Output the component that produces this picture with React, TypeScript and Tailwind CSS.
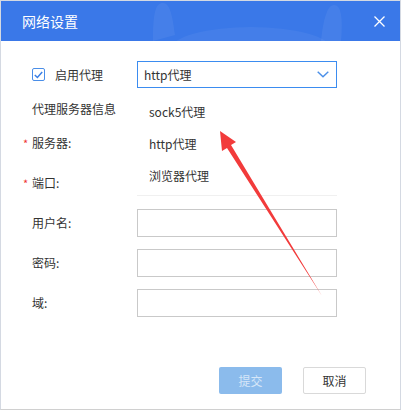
import React from "react";

const font = { fontFamily: '"Noto Sans CJK SC", "Liberation Sans", sans-serif' };

const Field = ({ label, req, input = true }: { label: string; req?: boolean; input?: boolean }) => (
  <div className="flex items-center h-[28px]">
    <div className="relative w-[105px] text-[12px] text-[#333]">
      {req && <span className="absolute -left-[9px] top-[1px] text-[#e33] text-[11px]">*</span>}
      {label}
    </div>
    {input && <div className="w-[200px] h-[28px] border border-[#c9c9c9] bg-white" />}
  </div>
);

const App = () => {
  return (
    <div
      style={font}
      className="relative w-[401px] h-[410px] bg-white border border-[#d4d9e2] border-b-[#d0d0d0] overflow-hidden flex flex-col"
    >
      <div className="relative h-[40px] bg-[#3a78e8] flex items-center justify-between pl-[21px] pr-[15px] overflow-hidden">
        <svg className="absolute left-0 top-0" width="401" height="40" viewBox="0 0 401 40">
          <path d="M152 40 C152 10 155 2 162 2 C170 2 172 20 174 34 Z" fill="#ffffff" opacity="0.06" />
          <path d="M320 40 C322 20 326 4 333 4 C340 4 342 16 340 40 Z" fill="#ffffff" opacity="0.06" />
          <ellipse cx="250" cy="48" rx="80" ry="22" fill="#ffffff" opacity="0.05" />
        </svg>
        <span className="relative text-white text-[14px]">网络设置</span>
        <svg className="relative" width="11" height="11" viewBox="0 0 11 11">
          <path d="M0.5 0.5 L10.5 10.5 M10.5 0.5 L0.5 10.5" stroke="#fff" strokeWidth="1.3" />
        </svg>
      </div>

      <div className="relative flex-1 flex flex-col pl-[31px]">
        <div className="flex flex-col gap-3 pt-[20px]">
          <div className="flex items-center h-[27px]">
            <div className="w-[105px] flex items-center gap-[10px]">
              <span className="w-[13px] h-[13px] border border-[#4a8ee8] rounded-[2px] flex items-center justify-center">
                <svg width="9" height="8" viewBox="0 0 9 8">
                  <path d="M0.8 4 L3.4 6.5 L8.2 1" stroke="#3a7fe6" strokeWidth="1.5" fill="none" />
                </svg>
              </span>
              <span className="text-[12px] text-[#333]">启用代理</span>
            </div>
            <div className="w-[200px] h-[27px] border border-[#3b8cf0] flex items-center justify-between pl-[6px] pr-[7px] text-[12px] text-[#333]">
              <span>http代理</span>
              <svg width="12" height="7" viewBox="0 0 12 7">
                <path d="M0.7 0.7 L6 5.8 L11.3 0.7" stroke="#4a8fe8" strokeWidth="1.4" fill="none" />
              </svg>
            </div>
          </div>
          <div className="h-[16px] flex items-center text-[12px] text-[#333] mt-[1px]">代理服务器信息</div>
          <Field label="服务器:" req input={false} />
          <Field label="端口:" req input={false} />
          <Field label="用户名:" />
          <Field label="密码:" />
          <Field label="域:" />
        </div>

        <div className="absolute left-[136px] top-[48px] w-[200px] h-[107px] bg-white border-b border-[#f0f0f0] py-[7px] text-[12px] text-[#333]">
          <div className="h-[32px] flex items-center pl-[12px]">sock5代理</div>
          <div className="h-[32px] flex items-center pl-[12px]">http代理</div>
          <div className="h-[32px] flex items-center pl-[12px]">浏览器代理</div>
        </div>

        <div className="flex justify-end gap-[21px] pr-[34px] mt-[50px]">
          <div className="w-[63px] h-[27px] bg-[#8bbbec] rounded-[2px] flex items-center justify-center text-[12px] text-[#d6e6f8]">
            提交
          </div>
          <div className="w-[63px] h-[27px] border border-[#d9d9d9] rounded-[2px] flex items-center justify-center text-[12px] text-[#333]">
            取消
          </div>
        </div>
      </div>

      <svg className="absolute left-0 top-0 pointer-events-none" width="401" height="410" viewBox="0 0 401 410">
        <polygon points="219,130 235,141 230,144 321,295 226,147 221,150" fill="#f23b3b" />
      </svg>
    </div>
  );
};

export default App;
